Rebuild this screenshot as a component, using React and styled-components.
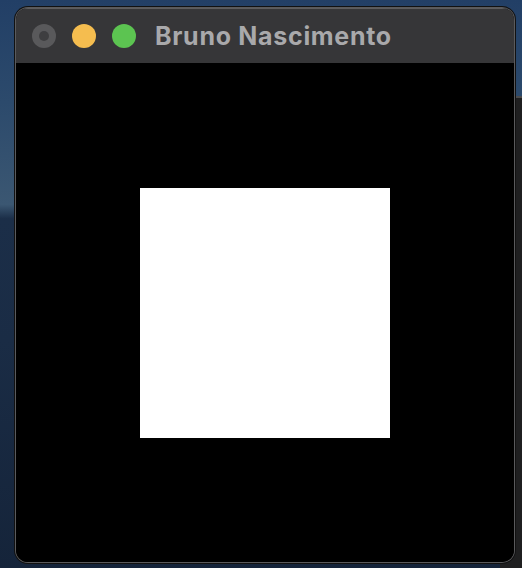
import React from "react";
import styled, { createGlobalStyle } from "styled-components";

const GlobalStyle = createGlobalStyle`
  html, body {
    margin: 0;
    padding: 0;
    width: 522px;
    height: 568px;
    overflow: hidden;
  }
`;

const Desktop = styled.div`
  position: relative;
  width: 522px;
  height: 568px;
  overflow: hidden;
  background:
    linear-gradient(180deg,
      #223f66 0%,
      #2c4a6c 18%,
      #3b5772 36%,
      #1b2e48 38.5%,
      #1a2c45 60%,
      #15243a 100%);
`;

const BehindWindow = styled.div`
  position: absolute;
  left: 500px;
  top: 96px;
  width: 60px;
  height: 500px;
  background: #1f1f20;
  border-top: 2px solid #4a4a4c;
`;

const Window = styled.div`
  position: absolute;
  left: 16px;
  top: 8px;
  width: 498px;
  height: 554px;
  display: flex;
  flex-direction: column;
  border-radius: 12px;
  overflow: hidden;
  background: #000;
  box-shadow: 0 0 0 1px #5a5a5c, 0 0 0 2px #111;
`;

const TitleBar = styled.div`
  height: 55px;
  flex: none;
  display: flex;
  align-items: center;
  padding-left: 16px;
  gap: 16px;
  background: #363638;
  box-shadow: inset 0 1px 0 #5c5c5e;
`;

const Light = styled.span`
  width: 24px;
  height: 24px;
  border-radius: 50%;
  background: ${(p) => p.color};
  display: flex;
  align-items: center;
  justify-content: center;
`;

const LightDot = styled.span`
  width: 10px;
  height: 10px;
  border-radius: 50%;
  background: #3e3e40;
`;

const Title = styled.h1`
  margin: 0 0 0 3px;
  font-family: Inter, "Liberation Sans", sans-serif;
  font-weight: 700;
  font-size: 25px;
  color: #a9a9ab;
  letter-spacing: 0.7px;
`;

const Content = styled.div`
  flex: 1;
  display: flex;
  align-items: center;
  justify-content: center;
  background: #000;
`;

const Square = styled.div`
  width: 250px;
  height: 250px;
  background: #fff;
`;

export default function App() {
  return (
    <Desktop>
      <GlobalStyle />
      <BehindWindow />
      <Window>
        <TitleBar>
          <Light color="#59595b">
            <LightDot />
          </Light>
          <Light color="#f5bd4f" />
          <Light color="#5cc451" />
          <Title>Bruno Nascimento</Title>
        </TitleBar>
        <Content>
          <Square />
        </Content>
      </Window>
    </Desktop>
  );
}
